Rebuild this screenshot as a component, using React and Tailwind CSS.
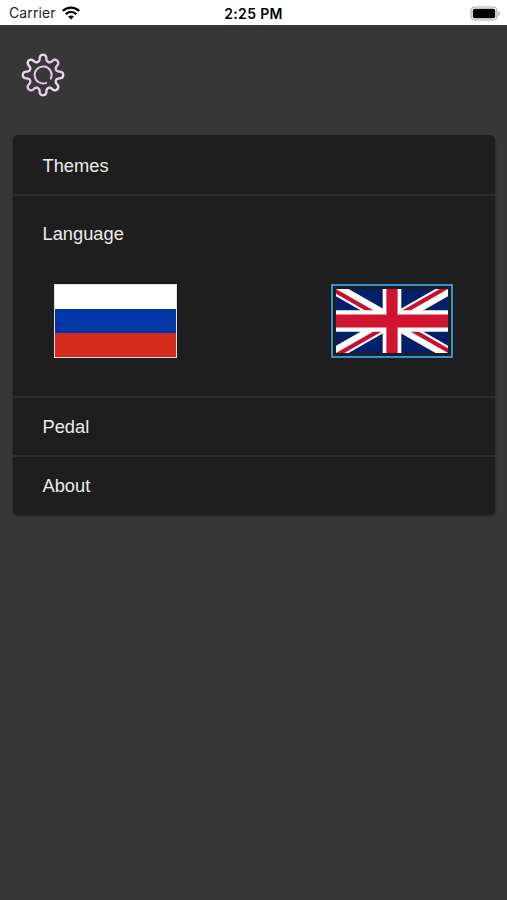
const gearPath = () => {
  const points = [];
  for (let i = 0; i < 240; i++) {
    const t = (i / 240) * Math.PI * 2;
    const r = 17.1 + 3.1 * Math.cos(8 * t);
    const a = t + 0.035 * Math.sin(16 * t);
    points.push(`${(22 + r * Math.cos(a)).toFixed(2)} ${(22 + r * Math.sin(a)).toFixed(2)}`);
  }
  return `M${points.join("L")}Z`;
};

const Gear = () => (
  <svg width="44" height="44" viewBox="0 0 44 44" fill="none" strokeWidth="2.4" strokeLinecap="round">
    <defs>
      <linearGradient id="gear" x1="0" y1="0" x2="1" y2="1">
        <stop offset="0" stopColor="#f6ebf6" />
        <stop offset="0.5" stopColor="#dcbfe0" />
        <stop offset="1" stopColor="#f6ecf5" />
      </linearGradient>
    </defs>
    <path d={gearPath()} stroke="url(#gear)" />
    <path d="M29.8 25.6A8.5 8.5 0 1 0 25.2 29.9" stroke="#dcc5df" strokeWidth="2" />
  </svg>
);

const Wifi = () => (
  <svg width="18" height="14" viewBox="0 0 18 14" fill="none" stroke="#000" strokeWidth="2.3">
    <path d="M.8 5C5.4.4 12.6.4 17.2 5" />
    <path d="M3.7 8.2C6.7 5.2 11.3 5.2 14.3 8.2" />
    <path d="M9 13.5L6.1 10.5C7.8 9 10.2 9 11.9 10.5Z" fill="#000" stroke="none" />
  </svg>
);

const Battery = () => (
  <svg width="31" height="15" viewBox="0 0 31 15">
    <rect x="1" y="1" width="26" height="13" rx="4" fill="#fff" stroke="#aaa" strokeWidth="1.2" />
    <rect x="2.8" y="2.8" width="22.4" height="9.4" rx="2" fill="#000" />
    <path d="M28.3 5.2C30.4 6 30.4 9 28.3 9.8Z" fill="#aaa" />
  </svg>
);

const UnionJack = () => (
  <svg className="block h-full w-full" viewBox="0 0 60 30" preserveAspectRatio="none">
    <clipPath id="quarters">
      <path d="M30 15h30v15zv15H0zH0V0zV0h30z" />
    </clipPath>
    <path d="M0 0h60v30H0z" fill="#00206a" />
    <path d="M0 0L60 30M60 0L0 30" stroke="#fff" strokeWidth="6" />
    <path d="M0 0L60 30M60 0L0 30" clipPath="url(#quarters)" stroke="#c8102e" strokeWidth="4" />
    <path d="M30 0V30M0 15H60" stroke="#fff" strokeWidth="10" />
    <path d="M30 0V30M0 15H60" stroke="#d0142f" strokeWidth="6" />
  </svg>
);

const Row = ({ title }) => (
  <div className="flex h-[59px] items-center border-t-2 border-[#2d2d2d] pt-px pl-[29.5px]">{title}</div>
);

export default function App() {
  return (
    <div className="flex h-[900px] w-[507px] flex-col bg-[#373737] font-['Liberation_Sans',Arial,sans-serif]">
      <header className="grid h-[25px] shrink-0 grid-cols-3 items-center bg-white text-black">
        <div className="flex items-center pt-px pl-[9px] font-['Inter',sans-serif] text-[14px] leading-none tracking-[0.1px] text-[#222]">
          <span className="mr-[6px]">Carrier</span>
          <Wifi />
        </div>
        <div className="pt-[2px] text-center font-['Inter',sans-serif] text-[14px] leading-none font-semibold tracking-[0.35px]">
          2:25 PM
        </div>
        <div className="flex justify-end pt-px pr-[6px]">
          <Battery />
        </div>
      </header>

      <div className="mt-[28px] ml-[21px] h-[44px]">
        <Gear />
      </div>

      <main className="mt-[38px] mr-[12px] ml-[13px] overflow-hidden rounded-[5px] bg-[#1e1e1e] text-[18.3px] leading-none text-[#ececec] shadow-[0_2px_3px_rgba(0,0,0,0.3)]">
        <div className="flex h-[59px] items-center pt-[3px] pl-[29.5px]">Themes</div>
        <section className="h-[202px] border-t-2 border-[#2d2d2d] pt-[29px] pr-[42px] pl-[29.5px]">
          <h2>Language</h2>
          <div className="mt-[41px] flex justify-between pl-[11.5px]">
            <button className="flex h-[74px] w-[123px] flex-col border border-[#ddd]">
              <span className="w-full flex-1 bg-white" />
              <span className="w-full flex-1 bg-[#0036a5]" />
              <span className="w-full flex-1 bg-[#d52b1e]" />
            </button>
            <button className="h-[74px] w-[122px] border-2 border-[#2f93dc] p-[3px]">
              <UnionJack />
            </button>
          </div>
        </section>
        <Row title="Pedal" />
        <Row title="About" />
        <div className="h-px" />
      </main>
    </div>
  );
}
